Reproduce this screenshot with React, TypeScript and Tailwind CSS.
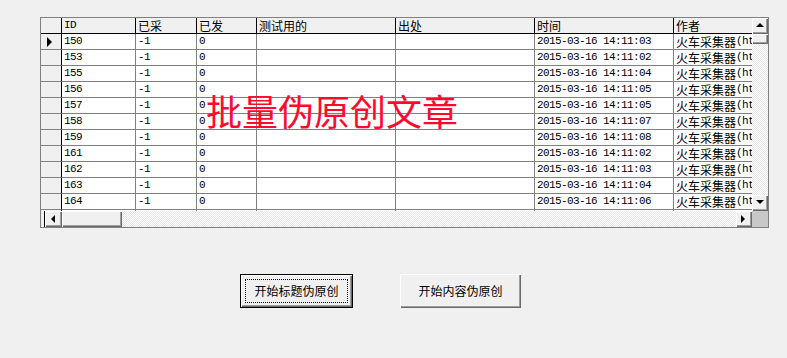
import React from 'react';

const rows: [string, string][] = [
  ['150', '14:11:03'],
  ['153', '14:11:02'],
  ['155', '14:11:04'],
  ['156', '14:11:05'],
  ['157', '14:11:05'],
  ['158', '14:11:07'],
  ['159', '14:11:08'],
  ['161', '14:11:02'],
  ['162', '14:11:03'],
  ['163', '14:11:04'],
  ['164', '14:11:06'],
];

const mono = "font-['Liberation_Mono',monospace] text-[11px] tracking-[-0.6px]";
const cjk = "font-['Noto_Sans_CJK_SC',sans-serif] text-[12px]";

const bevel =
  'bg-[#f0f0f0] shadow-[inset_1px_1px_#ffffff,inset_-1px_-1px_#696969,inset_-2px_-2px_#a0a0a0]';

const ScrollButton: React.FC<{ dir: 'up' | 'down' | 'left' | 'right'; className?: string }> = ({ dir, className }) => {
  const pts = {
    up: '1,6 5,2 9,6',
    down: '1,2 5,6 9,2',
    left: '6,1 2,5 6,9',
    right: '2,1 6,5 2,9',
  }[dir];
  return (
    <div className={`flex items-center justify-center shrink-0 ${bevel} ${className ?? ''}`}>
      <svg width="10" height="10" viewBox="0 0 10 10">
        <polygon points={pts} fill="#000" />
      </svg>
    </div>
  );
};

const Cell: React.FC<{ w: string; children?: React.ReactNode; className?: string }> = ({ w, children, className }) => (
  <div className={`${w} shrink-0 h-full flex items-center pl-[2px] overflow-hidden whitespace-nowrap ${className ?? ''}`}>
    {children}
  </div>
);

export default function App() {
  return (
    <div className="relative w-[787px] h-[358px] bg-[#f0f0f0] pt-[17px] pl-[40px] text-black overflow-hidden">
      <div className="w-[729px] h-[211px] border border-[#808080] flex flex-col">
        <div className="flex flex-1 min-h-0">
          {/* table */}
          <div className="flex-1 min-w-0 overflow-hidden bg-white">
            <div className="flex h-[16px] bg-[#f0f0f0] border-b border-black">
              <Cell w="w-[21px]" className="border-r border-black" />
              <Cell w="w-[74px]" className={`border-r border-black ${mono}`}>ID</Cell>
              <Cell w="w-[61px]" className={`border-r border-black ${cjk}`}>已采</Cell>
              <Cell w="w-[60px]" className={`border-r border-black ${cjk}`}>已发</Cell>
              <Cell w="w-[139px]" className={`border-r border-black ${cjk}`}>测试用的</Cell>
              <Cell w="w-[139px]" className={`border-r border-black ${cjk}`}>出处</Cell>
              <Cell w="w-[139px]" className={`border-r border-black ${cjk}`}>时间</Cell>
              <Cell w="w-[78px]" className={cjk}>作者</Cell>
            </div>
            {[...rows, ['165', '14:11:07'] as [string, string]].map(([id, t]) => (
              <div key={id} className="flex h-[16px]">
                <Cell w="w-[21px]" className="bg-[#f0f0f0] border-r border-black border-b border-b-[#808080] justify-center pl-0">
                  {id === '150' && (
                    <svg width="8" height="10" viewBox="0 0 8 10" className="mr-[4px]">
                      <polygon points="1,0 6,5 1,10" fill="#000" />
                    </svg>
                  )}
                </Cell>
                <Cell w="w-[74px]" className={`border-r border-b border-[#808080] ${mono}`}>{id}</Cell>
                <Cell w="w-[61px]" className={`border-r border-b border-[#808080] ${mono}`}>-1</Cell>
                <Cell w="w-[60px]" className={`border-r border-b border-[#808080] ${mono}`}>0</Cell>
                <Cell w="w-[139px]" className="border-r border-b border-[#808080]" />
                <Cell w="w-[139px]" className="border-r border-b border-[#808080]" />
                <Cell w="w-[139px]" className={`border-r border-b border-[#808080] ${mono}`}>2015-03-16 {t}</Cell>
                <Cell w="w-[78px]" className="border-b border-[#808080]">
                  <span className={cjk}>火车采集器</span>
                  <span className={mono}>(ht</span>
                </Cell>
              </div>
            ))}
          </div>
          {/* vertical scrollbar */}
          <div className="w-[16px] flex flex-col">
            <ScrollButton dir="up" className="h-[16px]" />
            <div className={`h-[10px] ${bevel}`} />
            <div className="flex-1 bg-[repeating-conic-gradient(#ffffff_0_25%,#e6e6e6_0_50%)] bg-[length:2px_2px]" />
            <ScrollButton dir="down" className="h-[16px]" />
          </div>
        </div>
        {/* horizontal scrollbar */}
        <div className="flex h-[16px]">
          <div className="w-[4px] bg-[#f0f0f0] border-r border-black" />
          <ScrollButton dir="left" className="w-[17px]" />
          <div className={`w-[60px] ${bevel}`} />
          <div className="flex-1 bg-[repeating-conic-gradient(#ffffff_0_25%,#e6e6e6_0_50%)] bg-[length:2px_2px]" />
          <ScrollButton dir="right" className="w-[16px]" />
          <div className="w-[16px] bg-[#c8c8c8]" />
        </div>
      </div>

      <div className="flex mt-[46px]">
        <button className={`relative ml-[200px] w-[113px] h-[34px] border border-black ${bevel} ${cjk}`}>
          <span className="absolute inset-[4px] border border-dotted border-black" />
          <span className="relative">开始标题伪原创</span>
        </button>
        <button className={`ml-[47px] w-[121px] h-[34px] ${bevel} ${cjk}`}>开始内容伪原创</button>
      </div>

      <div className="absolute left-[206px] top-[92px] font-['Noto_Sans_CJK_SC',sans-serif] text-[36px] leading-none text-[#ff0a2e] whitespace-nowrap">
        批量伪原创文章
      </div>
    </div>
  );
}
